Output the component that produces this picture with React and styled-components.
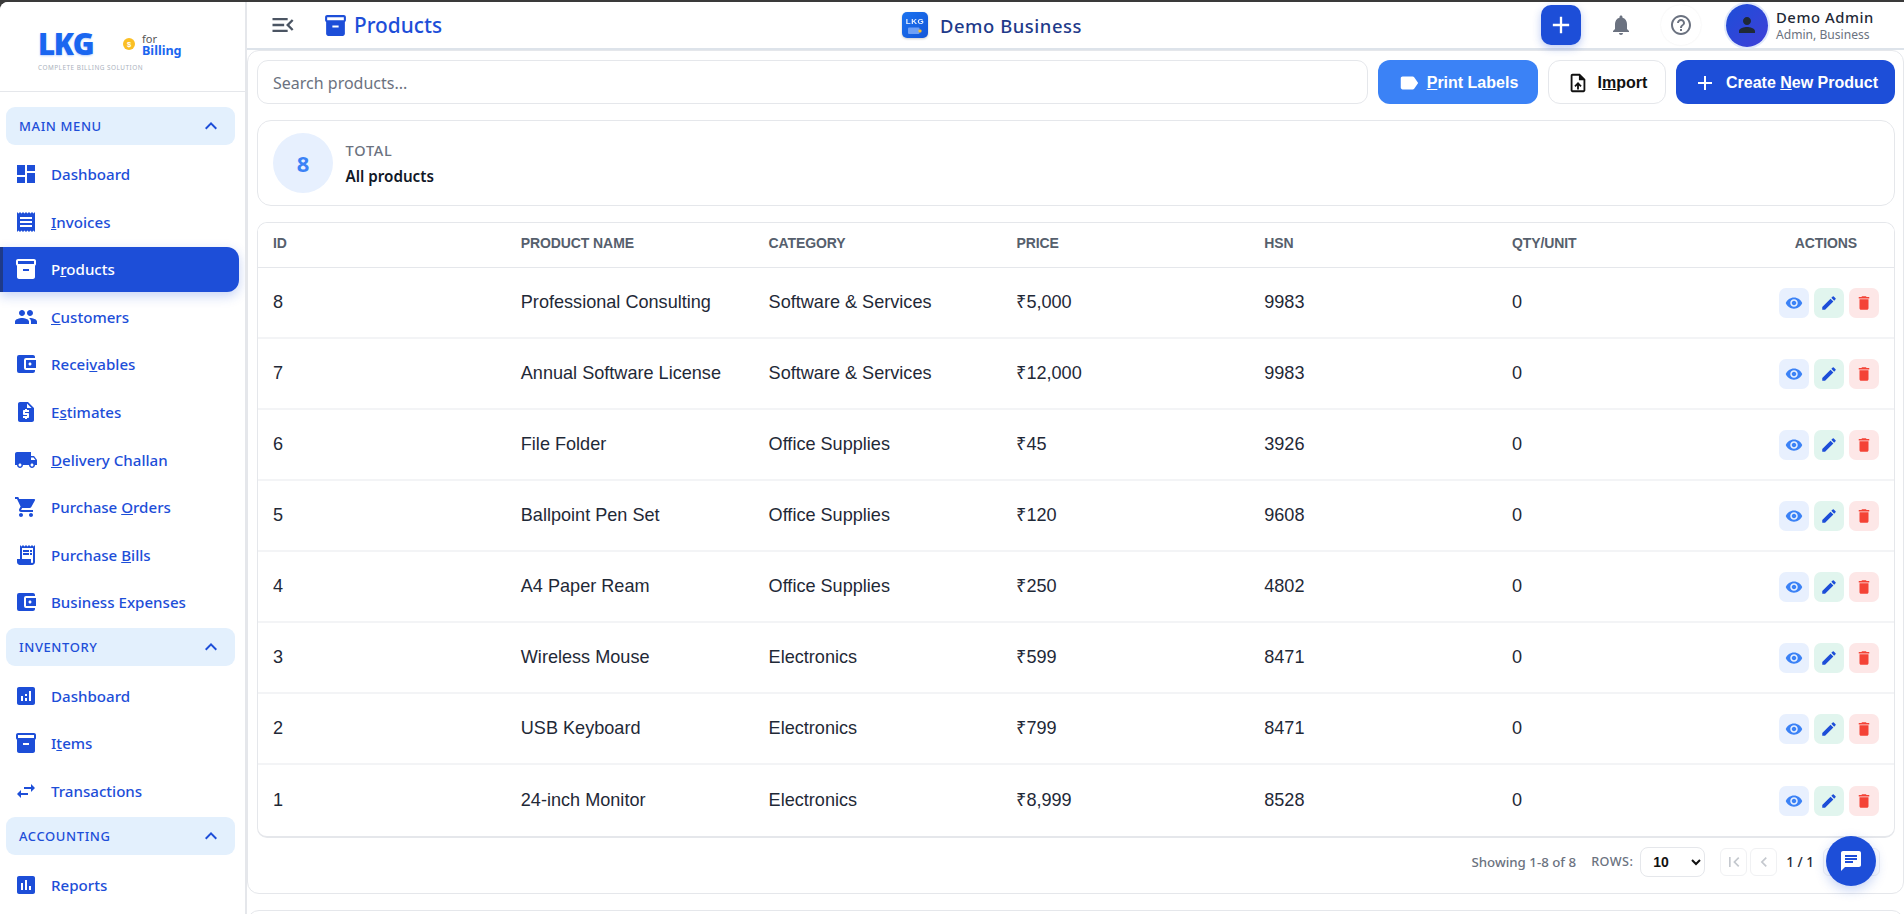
import React from 'react';
import styled, { createGlobalStyle } from 'styled-components';
import {
  MdDashboard, MdReceipt, MdInventory2, MdPeople, MdAccountBalanceWallet, MdRequestQuote,
  MdLocalShipping, MdShoppingCart, MdReceiptLong, MdAnalytics, MdSwapHoriz, MdAssessment,
  MdExpandLess, MdMenuOpen, MdAdd, MdNotifications, MdHelpOutline, MdPerson, MdLabel,
  MdUploadFile, MdVisibility, MdEdit, MdDelete, MdChat, MdFirstPage, MdLastPage, MdChevronLeft, MdChevronRight,
} from 'react-icons/md';

const UI = '"Noto Sans", "Open Sans", sans-serif';
const ARIAL = '"Liberation Sans", Arial, sans-serif';
const BLUE = '#1d4ed8';

const Global = createGlobalStyle`
  * { box-sizing: border-box; }
  html, body { margin: 0; padding: 0; height: 100%; overflow: hidden; background: #333; }
  body { font-family: ${UI}; }
`;

const Frame = styled.div`
  height: 914px; padding-top: 2px; background: #3a3a3a; overflow: hidden;
`;
const Shell = styled.div`
  display: flex; height: 912px; background: #fff; border-radius: 8px 0 0 0; overflow: hidden;
`;
const Sidebar = styled.aside`
  width: 247px; flex: none; border-right: 2px solid #e5e7eb; background: #fff; overflow: hidden;
`;
const LogoArea = styled.div`
  height: 90px; border-bottom: 1px solid #e5e7eb; padding: 27px 0 0 38px;
`;
const LogoRow = styled.div`
  display: flex; align-items: center; height: 30px;
`;
const LogoMark = styled.span`
  font: 900 29.5px/30px "Open Sans", sans-serif; color: #1a66f0; letter-spacing: -1.3px;
  text-shadow: 0 1px 2px rgba(26,102,240,.3); width: 85px;
`;
const LogoFor = styled.div`
  display: flex; flex-direction: column; margin-left: 7px; margin-top: 2px;
`;
const ForText = styled.span`
  font: 400 11px/11px ${UI}; color: #555;
`;
const BillingText = styled.span`
  font: 700 12.6px/14px ${UI}; color: #1a66f0;
`;
const LogoTag = styled.div`
  font: 400 6.4px/8px ${UI}; letter-spacing: .5px; color: #aab2bd; margin-top: 5px; text-transform: uppercase;
`;
const Nav = styled.nav`
  padding-top: 15px;
`;
const SectionHead = styled.div`
  display: flex; align-items: center; justify-content: space-between;
  width: 229px; height: 38px; margin: ${p => p.$first ? '0' : '3.5px'} 0 ${p => p.$first ? '6.5px' : '7px'} 6px; padding: 0 12px 0 13px;
  border-radius: 9px; background: #e3f0fd; color: ${BLUE};
  font: 500 13px ${UI}; letter-spacing: .6px;
`;
const Item = styled.div`
  display: flex; align-items: center; gap: 13px; height: 45px; margin-bottom: 2.6px;
  width: ${p => p.$active ? '239px' : '235px'};
  padding-left: ${p => p.$active ? '11px' : '14px'};
  border-left: ${p => p.$active ? '3px solid #1e3a8a' : 'none'};
  border-radius: ${p => p.$active ? '0 12px 12px 0' : '0'};
  background: ${p => p.$active ? BLUE : 'transparent'};
  box-shadow: ${p => p.$active ? '0 4px 12px rgba(29,78,216,.25)' : 'none'};
  color: ${p => p.$active ? '#fff' : BLUE};
  font: 500 15.1px ${UI};
  svg { flex: none; }
`;

const Content = styled.div`
  flex: 1; min-width: 0; display: flex; flex-direction: column; background: #fff;
`;
const TopBar = styled.header`
  height: 48px; flex: none; display: flex; align-items: center; position: relative;
  border-bottom: 2px solid #dde3ea; padding: 0 0 0 22px;
`;
const MenuBtn = styled.span`
  display: flex; color: #4b5563; margin-right: 26px;
`;
const PageTitle = styled.div`
  display: flex; align-items: center; gap: 6px; color: ${BLUE}; font: 500 20.8px ${UI}; width: 579px;
`;
const BizBlock = styled.div`
  display: flex; align-items: center; gap: 12px; color: #1e3a8a; font: 500 18.4px ${UI}; letter-spacing: .55px;
  width: 639px;
`;
const BizLogo = styled.svg`
  flex: none; filter: drop-shadow(0 1px 1px rgba(0,0,0,.2));
`;
const AddBtn = styled.button`
  width: 40px; height: 40px; border: 0; border-radius: 10px; background: ${BLUE}; color: #fff; padding: 0;
  display: flex; align-items: center; justify-content: center; box-shadow: 0 3px 8px rgba(29,78,216,.3);
`;
const RoundIcon = styled.span`
  width: 40px; height: 40px; border-radius: 50%; display: flex; align-items: center; justify-content: center; color: #6b7280;
  margin-left: ${p => p.$ml}px; box-shadow: ${p => p.$ring ? '0 0 2px rgba(0,0,0,.08)' : 'none'};
`;
const Avatar = styled.span`
  width: 42px; height: 43px; border-radius: 50%; margin-left: 25px; flex: none;
  background: linear-gradient(135deg, ${BLUE}, #3f3fd8); color: #1f2937;
  display: flex; align-items: center; justify-content: center; box-shadow: 0 0 0 2px #e0e9fb;
`;
const UserInfo = styled.div`
  display: flex; flex-direction: column; margin-left: 8px;
`;
const UserName = styled.span`
  font: 500 14.8px/18px ${UI}; color: #1f2937; letter-spacing: .55px;
`;
const UserRole = styled.span`
  font: 400 12.1px/17px ${UI}; color: #6b7280;
`;

const MainCard = styled.main`
  flex: none; height: 844px; padding: 9px 8px 0 9px;
  border: 1px solid #e5e7eb; border-radius: 12px; background: #fff;
`;
const NextCard = styled.div`
  flex: none; height: 40px; margin-top: 16px; border: 1px solid #e5e7eb; border-radius: 12px;
`;
const ToolRow = styled.div`
  display: flex; gap: 10px; height: 44px;
`;
const Search = styled.input`
  flex: 1; min-width: 0; height: 44px; padding: 2px 15px 0; border: 1px solid #e5e7eb; border-radius: 11px;
  font: 400 16px ${UI}; color: #111; outline: none; margin-right: 0;
  &::placeholder { color: #6b7280; opacity: 1; }
`;
const ActionBtn = styled.button`
  width: ${p => p.$w}px; flex: none; height: 44px; border-radius: 12px; padding: 1px 0 0;
  display: flex; align-items: center; justify-content: center; gap: ${p => p.$gap}px;
  font: 700 16px ${ARIAL};
  border: ${p => p.$tone === 'plain' ? '1px solid #e5e7eb' : '0'};
  background: ${p => p.$tone === 'light' ? '#3b82f6' : p.$tone === 'plain' ? '#fff' : BLUE};
  color: ${p => p.$tone === 'plain' ? '#111' : '#fff'};
`;
const StatCard = styled.section`
  display: flex; align-items: center; gap: 12.5px; height: 86px; margin-top: 16px; padding: 0 15px;
  border: 1px solid #e5e7eb; border-radius: 14px;
`;
const StatCircle = styled.div`
  width: 60px; height: 60px; border-radius: 50%; background: #e7f0fe; color: #3b82f6;
  display: flex; align-items: center; justify-content: center; font: 700 22px ${UI};
`;
const StatText = styled.div`
  display: flex; flex-direction: column; gap: 7px;
`;
const StatLabel = styled.span`
  font: 500 14.5px/19px ${UI}; color: #6b7280; letter-spacing: .8px;
`;
const StatValue = styled.span`
  font: 600 15.2px/19px ${UI}; color: #111827;
`;
const TableCard = styled.section`
  margin-top: 16px; border: 1px solid #e5e7eb; border-bottom-width: 2px; border-radius: 10px; overflow: hidden;
`;
const Table = styled.table`
  width: 100%; border-collapse: separate; border-spacing: 0; table-layout: fixed;
`;
const Th = styled.th`
  height: 45px; padding: ${p => p.$center ? '0 15px 4px 28px' : '0 15px 4px'}; text-align: ${p => p.$center ? 'center' : 'left'};
  font: 700 14px ${ARIAL}; color: #565f6d; letter-spacing: -.1px;
  border-bottom: 1px solid #e5e7eb; background: #fff;
  width: ${p => p.$w ? p.$w + 'px' : 'auto'};
`;
const Td = styled.td`
  height: 71px; padding: 0 15px 2px; font: 400 18.1px/22px ${ARIAL}; color: #1f2937; border-bottom: 2px solid #f3f4f6;
  tr:last-child & { border-bottom: 0; }
`;
const Actions = styled.div`
  display: flex; justify-content: flex-end; gap: 5px; margin-bottom: -2px;
`;
const IconBtn = styled.button`
  width: 30px; height: 30px; padding: 0; border: 0; border-radius: 7px; background: ${p => p.$bg}; color: ${p => p.$fg};
  display: flex; align-items: center; justify-content: center;
`;
const Pager = styled.div`
  height: 56px; display: flex; align-items: center; justify-content: flex-end; padding: 0 15px 9px 0;
`;
const Showing = styled.span`
  font: 500 13.3px ${UI}; color: #6b7280; margin-right: 15px;
`;
const RowsLabel = styled.span`
  font: 500 12.6px ${UI}; color: #6b7280; margin-right: 7px; letter-spacing: .45px;
`;
const RowsSelect = styled.select`
  width: 65px; height: 30px; border: 1px solid #e5e7eb; border-radius: 8px; background: #fff; padding-left: 8px;
  font: 700 14px ${ARIAL}; color: #111; margin-right: 15px;
`;
const PageBtn = styled.span`
  width: 27px; height: 28px; border: 1px solid #f0f1f3; border-radius: 6px; color: #c4c8ce;
  display: flex; align-items: center; justify-content: center; margin-left: ${p => p.$ml || 0}px;
`;
const PageNum = styled.span`
  font: 500 13.5px ${UI}; color: #1f2937; margin: 0 9px;
`;
const ChatFab = styled.button`
  position: fixed; right: 28px; bottom: 28px; width: 50px; height: 50px; border: 0; border-radius: 50%; padding: 0;
  background: ${BLUE}; color: #fff; display: flex; align-items: center; justify-content: center;
  box-shadow: 0 4px 12px rgba(29,78,216,.25);
`;
const CoinSvg = styled.svg`
  flex: none;
`;

const main = [
  [MdDashboard, <>Dashboard</>],
  [MdReceipt, <><u>I</u>nvoices</>],
  [MdInventory2, <>P<u>r</u>oducts</>, true],
  [MdPeople, <><u>C</u>ustomers</>],
  [MdAccountBalanceWallet, <>Recei<u>v</u>ables</>],
  [MdRequestQuote, <>E<u>s</u>timates</>],
  [MdLocalShipping, <><u>D</u>elivery Challan</>],
  [MdShoppingCart, <>Purchase <u>O</u>rders</>],
  [MdReceiptLong, <>Purchase <u>B</u>ills</>],
  [MdAccountBalanceWallet, <>Business Expenses</>],
];
const inventory = [
  [MdAnalytics, <>Dashboard</>],
  [MdInventory2, <>I<u>t</u>ems</>],
  [MdSwapHoriz, <>Transactions</>],
];
const accounting = [[MdAssessment, <>Reports</>]];

const rows = [
  [8, 'Professional Consulting', 'Software & Services', '₹5,000', '9983'],
  [7, 'Annual Software License', 'Software & Services', '₹12,000', '9983'],
  [6, 'File Folder', 'Office Supplies', '₹45', '3926'],
  [5, 'Ballpoint Pen Set', 'Office Supplies', '₹120', '9608'],
  [4, 'A4 Paper Ream', 'Office Supplies', '₹250', '4802'],
  [3, 'Wireless Mouse', 'Electronics', '₹599', '8471'],
  [2, 'USB Keyboard', 'Electronics', '₹799', '8471'],
  [1, '24-inch Monitor', 'Electronics', '₹8,999', '8528'],
];

const Group = ({ title, items, first }) => (
  <>
    <SectionHead $first={first}>{title}<MdExpandLess size={24} /></SectionHead>
    {items.map(([Icon, label, active], i) => (
      <Item key={i} $active={active}><Icon size={24} /><span>{label}</span></Item>
    ))}
  </>
);

export default function App() {
  return (
    <Frame>
      <Global />
      <Shell>
        <Sidebar>
          <LogoArea>
            <LogoRow>
              <LogoMark>LKG</LogoMark>
              <CoinSvg width="12" height="12" viewBox="0 0 12 12">
                <circle cx="6" cy="6" r="6" fill="#fbbf24" />
                <text x="6" y="8.6" fontSize="7.5" fontWeight="700" textAnchor="middle" fill="#fff" fontFamily="Liberation Sans">$</text>
              </CoinSvg>
              <LogoFor><ForText>for</ForText><BillingText>Billing</BillingText></LogoFor>
            </LogoRow>
            <LogoTag>Complete Billing Solution</LogoTag>
          </LogoArea>
          <Nav>
            <Group title="MAIN MENU" items={main} first />
            <Group title="INVENTORY" items={inventory} />
            <Group title="ACCOUNTING" items={accounting} />
          </Nav>
        </Sidebar>
        <Content>
          <TopBar>
            <MenuBtn><MdMenuOpen size={28} /></MenuBtn>
            <PageTitle><MdInventory2 size={25} />Products</PageTitle>
            <BizBlock>
              <BizLogo width="26" height="26" viewBox="0 0 26 26">
                <defs>
                  <linearGradient id="bizGrad" x1="0" y1="0" x2="1" y2="1">
                    <stop offset="0" stopColor="#1a73f0" />
                    <stop offset="1" stopColor="#1556d8" />
                  </linearGradient>
                </defs>
                <rect width="26" height="26" rx="5" fill="url(#bizGrad)" />
                <text x="13" y="11.5" fontSize="8" fontWeight="700" textAnchor="middle" fill="#e8f0fe" fontFamily="Liberation Sans">LKG</text>
                <rect x="6" y="15.5" width="11.5" height="6.5" rx="1" fill="#6fa0f5" />
                <rect x="16.5" y="17.5" width="3" height="3" rx="1" fill="#fbbf24" />
              </BizLogo>
              Demo Business
            </BizBlock>
            <AddBtn><MdAdd size={28} /></AddBtn>
            <RoundIcon $ml={20}><MdNotifications size={24} /></RoundIcon>
            <RoundIcon $ml={20} $ring><MdHelpOutline size={24} /></RoundIcon>
            <Avatar><MdPerson size={24} /></Avatar>
            <UserInfo>
              <UserName>Demo Admin</UserName>
              <UserRole>Admin, Business</UserRole>
            </UserInfo>
          </TopBar>
          <MainCard>
            <ToolRow>
              <Search placeholder="Search products..." />
              <ActionBtn $tone="light" $w={160} $gap={7}><MdLabel size={22} /><span><u>P</u>rint Labels</span></ActionBtn>
              <ActionBtn $tone="plain" $w={118} $gap={9}><MdUploadFile size={22} /><span>I<u>m</u>port</span></ActionBtn>
              <ActionBtn $tone="primary" $w={219} $gap={9}><MdAdd size={24} /><span>Create <u>N</u>ew Product</span></ActionBtn>
            </ToolRow>
            <StatCard>
              <StatCircle>8</StatCircle>
              <StatText>
                <StatLabel>TOTAL</StatLabel>
                <StatValue>All products</StatValue>
              </StatText>
            </StatCard>
            <TableCard>
              <Table>
                <thead>
                  <tr>
                    <Th $w={247.8}>ID</Th>
                    <Th $w={247.8}>PRODUCT NAME</Th>
                    <Th $w={247.8}>CATEGORY</Th>
                    <Th $w={247.8}>PRICE</Th>
                    <Th $w={247.8}>HSN</Th>
                    <Th $w={247.8}>QTY/UNIT</Th>
                    <Th $center>ACTIONS</Th>
                  </tr>
                </thead>
                <tbody>
                  {rows.map(r => (
                    <tr key={r[0]}>
                      <Td>{r[0]}</Td>
                      <Td>{r[1]}</Td>
                      <Td>{r[2]}</Td>
                      <Td>{r[3]}</Td>
                      <Td>{r[4]}</Td>
                      <Td>0</Td>
                      <Td>
                        <Actions>
                          <IconBtn $bg="#e8f0fe" $fg="#3b82f6"><MdVisibility size={18} /></IconBtn>
                          <IconBtn $bg="#e1f5ee" $fg={BLUE}><MdEdit size={18} /></IconBtn>
                          <IconBtn $bg="#fde7e7" $fg="#f44336"><MdDelete size={18} /></IconBtn>
                        </Actions>
                      </Td>
                    </tr>
                  ))}
                </tbody>
              </Table>
            </TableCard>
            <Pager>
              <Showing>Showing 1-8 of 8</Showing>
              <RowsLabel>ROWS:</RowsLabel>
              <RowsSelect defaultValue="10">
                <option>10</option><option>25</option><option>50</option>
              </RowsSelect>
              <PageBtn><MdFirstPage size={20} /></PageBtn>
              <PageBtn $ml={3}><MdChevronLeft size={20} /></PageBtn>
              <PageNum>1 / 1</PageNum>
              <PageBtn><MdChevronRight size={20} /></PageBtn>
              <PageBtn $ml={3}><MdLastPage size={20} /></PageBtn>
            </Pager>
          </MainCard>
          <NextCard />
        </Content>
      </Shell>
      <ChatFab><MdChat size={24} /></ChatFab>
    </Frame>
  );
}
